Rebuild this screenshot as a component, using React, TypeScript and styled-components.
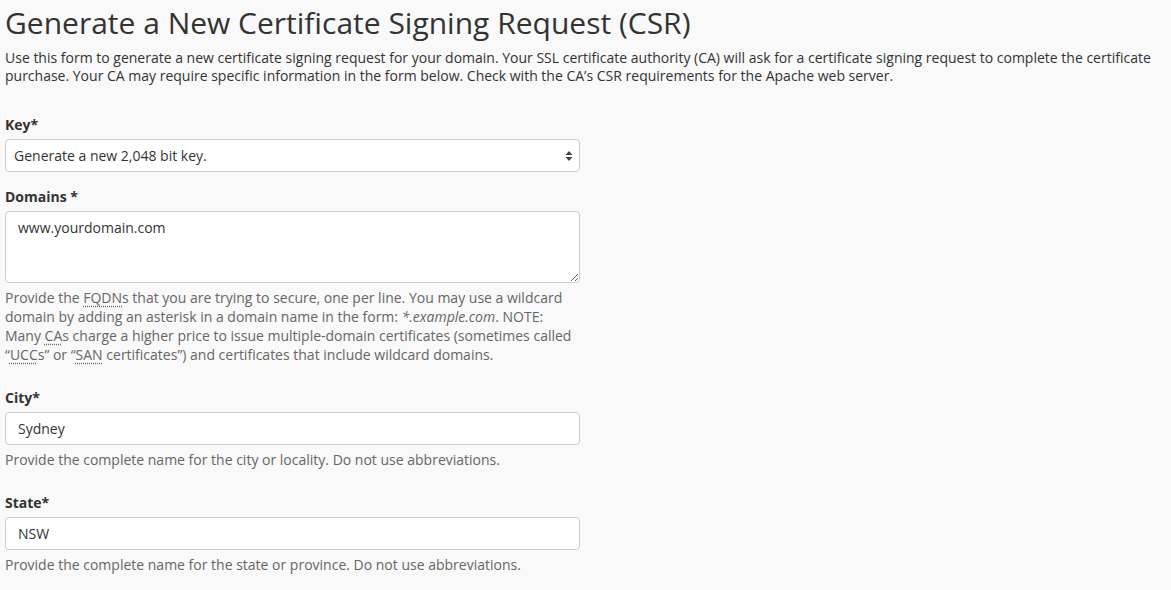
import React from "react";
import styled, { createGlobalStyle } from "styled-components";

const Global = createGlobalStyle`
  html, body { margin: 0; padding: 0; background: #f9f9f9; }
  body { font-family: "Open Sans", "Liberation Sans", sans-serif; color: #333; font-size: 14px; }
`;

const Page = styled.div`
  padding: 0 5px;
`;

const Title = styled.h1`
  margin: 0;
  padding-top: 3px;
  font-size: 30px;
  font-weight: 400;
  line-height: 40px;
  color: #333;
`;

const Intro = styled.p`
  margin: 6px 0 0;
  font-size: 14px;
  line-height: 18px;
  color: #333;
`;

const Form = styled.div`
  margin-top: 30px;
  width: 575px;
  display: flex;
  flex-direction: column;
`;

const Group = styled.div<{ $gap?: number }>`
  display: flex;
  flex-direction: column;
  margin-bottom: ${(p) => p.$gap ?? 14}px;
`;

const Label = styled.label`
  font-weight: 700;
  font-size: 14px;
  line-height: 20px;
  margin-bottom: 4px;
  color: #333;
`;

const fieldBase = `
  box-sizing: border-box;
  width: 575px;
  background: #fff;
  border: 1px solid #ccc;
  border-radius: 4px;
  font-family: "Open Sans", "Liberation Sans", sans-serif;
  font-size: 14px;
  color: #333;
  margin: 0;
`;

const SelectBox = styled.div`
  ${fieldBase}
  height: 33px;
  display: flex;
  align-items: center;
  justify-content: space-between;
  padding: 0 6px 0 8px;
`;

const Arrows = styled.svg`
  width: 8px;
  height: 12px;
`;

const TextArea = styled.textarea`
  ${fieldBase}
  height: 72px;
  padding: 6px 12px;
  line-height: 20px;
  resize: vertical;
  display: block;
`;

const Input = styled.input`
  ${fieldBase}
  height: 33px;
  padding: 0 12px;
  display: block;
`;

const Help = styled.div`
  margin-top: 5px;
  font-size: 14px;
  line-height: 19px;
  color: #666;
`;

const Abbr = styled.abbr`
  text-decoration: underline dotted;
  text-underline-offset: 3px;
  cursor: help;
`;

export default function App() {
  return (
    <>
      <Global />
      <Page>
        <Title>Generate a New Certificate Signing Request (CSR)</Title>
        <Intro>
          Use this form to generate a new certificate signing request for your domain. Your SSL certificate authority (CA) will ask for a certificate signing request to complete the certificate purchase. Your CA may require specific information in the form below. Check with the CA’s CSR requirements for the Apache web server.
        </Intro>
        <Form>
          <Group $gap={15}>
            <Label>Key*</Label>
            <SelectBox>
              <span>Generate a new 2,048 bit key.</span>
              <Arrows viewBox="0 0 8 12">
                <path d="M4 1 L7.5 5 L0.5 5 Z" fill="#444" />
                <path d="M4 11 L7.5 7 L0.5 7 Z" fill="#444" />
              </Arrows>
            </SelectBox>
          </Group>
          <Group $gap={24}>
            <Label>Domains *</Label>
            <TextArea defaultValue="www.yourdomain.com" />
            <Help>
              Provide the <Abbr title="Fully Qualified Domain Names">FQDN</Abbr>s that you are trying to secure, one per line. You may use a wildcard domain by adding an asterisk in a domain name in the form: <i>*.example.com</i>. NOTE: Many <Abbr title="Certificate Authorities">CA</Abbr>s charge a higher price to issue multiple-domain certificates (sometimes called “<Abbr title="Unified Communications Certificates">UCC</Abbr>s” or “<Abbr title="Subject Alternative Name">SAN</Abbr> certificates”) and certificates that include wildcard domains.
            </Help>
          </Group>
          <Group $gap={24}>
            <Label>City*</Label>
            <Input defaultValue="Sydney" />
            <Help>Provide the complete name for the city or locality. Do not use abbreviations.</Help>
          </Group>
          <Group $gap={0}>
            <Label>State*</Label>
            <Input defaultValue="NSW" />
            <Help>Provide the complete name for the state or province. Do not use abbreviations.</Help>
          </Group>
        </Form>
      </Page>
    </>
  );
}
